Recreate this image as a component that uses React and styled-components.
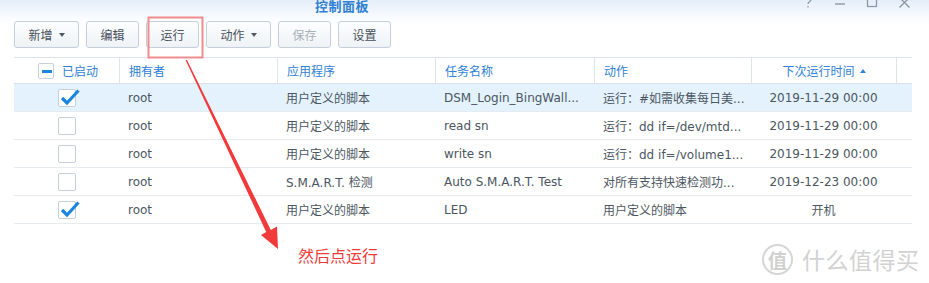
import React from "react";
import styled, { createGlobalStyle } from "styled-components";

const GlobalStyle = createGlobalStyle`
  html, body {
    margin: 0;
    padding: 0;
    background: #ffffff;
    overflow: hidden;
  }
  body {
    font-family: "DejaVu Sans", "Noto Sans CJK SC", sans-serif;
    font-size: 12px;
    color: #4b5661;
  }
`;

const Screen = styled.div`
  position: relative;
  display: flex;
  width: 929px;
  height: 283px;
  overflow: hidden;
`;

const Window = styled.div`
  flex: 1;
  display: flex;
  flex-direction: column;
  background: linear-gradient(#e4edf8 0px, #f6f9fd 14px, #ffffff 26px);
`;

const DesktopEdge = styled.div`
  width: 5px;
  background: linear-gradient(90deg, #2a78c6, #1b66b4);
`;

const TitleBar = styled.div`
  height: 17px;
  display: flex;
  align-items: flex-start;
`;

const Title = styled.div`
  margin: -2px 0 0 315px;
  font-family: "Noto Sans CJK SC", sans-serif;
  font-weight: 700;
  font-size: 13px;
  line-height: 15px;
  color: #2f7fd3;
  letter-spacing: 0.5px;
`;

const WinControls = styled.div`
  margin-left: auto;
  margin-right: 18px;
  display: flex;
  gap: 20px;
  align-items: flex-start;
  margin-top: -4px;
`;

const CtlIcon = styled.svg`
  display: block;
  stroke: #8d99a6;
  fill: none;
`;

const Toolbar = styled.div`
  display: flex;
  gap: 7px;
  padding: 4px 0 0 14px;
`;

const Button = styled.button`
  height: 27px;
  width: ${(p) => p.$w || 53}px;
  box-sizing: border-box;
  border: 1px solid #c6cfd9;
  border-radius: 3px;
  background: linear-gradient(#fdfeff, #eef2f6);
  font-family: "Noto Sans CJK SC", sans-serif;
  font-size: 12px;
  color: ${(p) => (p.disabled ? "#a8b0b8" : "#47515c")};
  display: flex;
  align-items: center;
  justify-content: center;
  gap: 6px;
  padding: 0;
`;

const Caret = styled.span`
  width: 0;
  height: 0;
  border-left: 3.5px solid transparent;
  border-right: 3.5px solid transparent;
  border-top: 4px solid #4f5963;
`;

const Table = styled.div`
  margin: 9px 17px 0 14px;
`;

const cols = "105px 158px 158px 159px 157px 145px 16px";

const HeadRow = styled.div`
  display: grid;
  grid-template-columns: ${cols};
  height: 27px;
  box-sizing: border-box;
  border-top: 1px solid #dbe2ea;
  border-bottom: 1px solid #dbe2ea;
`;

const HeadCell = styled.div`
  display: flex;
  align-items: center;
  justify-content: ${(p) => (p.$center ? "center" : "flex-start")};
  padding-left: ${(p) => (p.$pad != null ? p.$pad : 9)}px;
  border-left: ${(p) => (p.$first ? "none" : "1px solid #dce4ec")};
  font-family: "Noto Sans CJK SC", sans-serif;
  font-size: 12px;
  color: #2e81d6;
  gap: 5px;
`;

const HeadLabel = styled.span`
  margin-left: 3px;
`;

const SortUp = styled.span`
  width: 0;
  height: 0;
  border-left: 3.5px solid transparent;
  border-right: 3.5px solid transparent;
  border-bottom: 4px solid #2e81d6;
`;

const Row = styled.div`
  display: grid;
  grid-template-columns: ${cols};
  height: 28px;
  box-sizing: border-box;
  border-bottom: 1px solid #e6ebf0;
  background: ${(p) => (p.$selected ? "#e4f2fd" : "transparent")};
`;

const Cell = styled.div`
  display: flex;
  align-items: center;
  justify-content: ${(p) => (p.$center ? "center" : "flex-start")};
  padding-left: ${(p) => (p.$center ? 0 : 9)}px;
  white-space: nowrap;
  overflow: hidden;
  color: #4b5661;
  font-family: "DejaVu Sans", "Noto Sans CJK SC", sans-serif;
  font-size: 12px;
`;

const Box = styled.span`
  position: relative;
  display: inline-block;
  width: ${(p) => p.$size}px;
  height: ${(p) => p.$size}px;
  box-sizing: border-box;
  border: 1px solid #c5d0db;
  border-radius: 2px;
  background: #ffffff;
`;

const Tick = styled.svg`
  position: absolute;
  left: 1px;
  top: -2px;
`;

const Dash = styled.span`
  position: absolute;
  left: 3px;
  top: 6px;
  width: 10px;
  height: 3px;
  background: #1b86e0;
`;

const Overlay = styled.svg`
  position: absolute;
  left: 0;
  top: 0;
  pointer-events: none;
`;

const Note = styled.div`
  position: absolute;
  left: 298px;
  top: 243px;
  font-family: "Noto Sans CJK SC", sans-serif;
  font-size: 16px;
  color: #f03b3b;
`;

const Watermark = styled.div`
  position: absolute;
  left: 762px;
  top: 242px;
  display: flex;
  align-items: center;
  gap: 9px;
  color: #d2d2d2;
  font-family: "Noto Sans CJK SC", sans-serif;
`;

const Badge = styled.span`
  width: 27px;
  height: 27px;
  border: 2px solid #d6d6d6;
  border-radius: 50%;
  display: flex;
  align-items: center;
  justify-content: center;
  font-size: 19px;
  font-weight: 700;
  color: #d0d0d0;
`;

const WmText = styled.span`
  font-size: 23px;
  letter-spacing: 0.5px;
`;

const CheckBox = ({ checked }) => (
  <Box $size={18}>
    {checked && (
      <Tick width="20" height="18" viewBox="0 0 20 18">
        <path d="M2 10 L7 15 L18.5 2.5" stroke="#1b86e0" strokeWidth="3.2" fill="none" />
      </Tick>
    )}
  </Box>
);

const rows = [
  { on: true, app: "用户定义的脚本", task: "DSM_Login_BingWall...", act: "运行：#如需收集每日美...", next: "2019-11-29 00:00", sel: true },
  { on: false, app: "用户定义的脚本", task: "read sn", act: "运行：dd if=/dev/mtd...", next: "2019-11-29 00:00" },
  { on: false, app: "用户定义的脚本", task: "write sn", act: "运行：dd if=/volume1...", next: "2019-11-29 00:00" },
  { on: false, app: "S.M.A.R.T. 检测", task: "Auto S.M.A.R.T. Test", act: "对所有支持快速检测功...", next: "2019-12-23 00:00" },
  { on: true, app: "用户定义的脚本", task: "LED", act: "用户定义的脚本", next: "开机" },
];

export default function App() {
  return (
    <>
      <GlobalStyle />
      <Screen>
        <Window>
          <TitleBar>
            <Title>控制面板</Title>
            <WinControls>
              <CtlIcon width="12" height="12" viewBox="0 0 12 12">
                <path d="M3 3.5 C3 0.5 9 0.5 9 3.5 C9 5.5 6 5.5 6 8" strokeWidth="1.3" />
                <path d="M6 10 L6 11.5" strokeWidth="1.3" />
              </CtlIcon>
              <CtlIcon width="12" height="12" viewBox="0 0 12 12">
                <path d="M1 8 L11 8" strokeWidth="1.4" />
              </CtlIcon>
              <CtlIcon width="12" height="12" viewBox="0 0 12 12">
                <rect x="1.5" y="1.5" width="9" height="9" strokeWidth="1.3" />
                <path d="M1.5 3 L10.5 3" strokeWidth="2" />
              </CtlIcon>
              <CtlIcon width="13" height="13" viewBox="0 0 13 13">
                <path d="M1.5 1.5 L11.5 11.5 M11.5 1.5 L1.5 11.5" strokeWidth="1.4" />
              </CtlIcon>
            </WinControls>
          </TitleBar>

          <Toolbar>
            <Button $w={65}>新增<Caret /></Button>
            <Button>编辑</Button>
            <Button>运行</Button>
            <Button $w={65}>动作<Caret /></Button>
            <Button disabled>保存</Button>
            <Button>设置</Button>
          </Toolbar>

          <Table>
            <HeadRow>
              <HeadCell $first $pad={24}>
                <Box $size={16}><Dash /></Box>
                <HeadLabel>已启动</HeadLabel>
              </HeadCell>
              <HeadCell>拥有者</HeadCell>
              <HeadCell>应用程序</HeadCell>
              <HeadCell>任务名称</HeadCell>
              <HeadCell>动作</HeadCell>
              <HeadCell $center $pad={0}>下次运行时间<SortUp /></HeadCell>
              <HeadCell $pad={0} />
            </HeadRow>
            {rows.map((r, i) => (
              <Row key={i} $selected={r.sel}>
                <Cell $center><CheckBox checked={r.on} /></Cell>
                <Cell>root</Cell>
                <Cell>{r.app}</Cell>
                <Cell>{r.task}</Cell>
                <Cell>{r.act}</Cell>
                <Cell $center>{r.next}</Cell>
                <Cell />
              </Row>
            ))}
          </Table>
        </Window>
        <DesktopEdge />

        <Overlay width="929" height="283" viewBox="0 0 929 283">
          <rect x="148.5" y="17.5" width="54" height="40" fill="none" stroke="#f08c8c" strokeWidth="2" />
          <polygon
            points="185.5,60 187,60 270.8,229.9 277,226.5 278,249 261,235 266.2,232.1"
            fill="#f23a3a"
          />
        </Overlay>
        <Note>然后点运行</Note>
        <Watermark>
          <Badge>值</Badge>
          <WmText>什么值得买</WmText>
        </Watermark>
      </Screen>
    </>
  );
}
